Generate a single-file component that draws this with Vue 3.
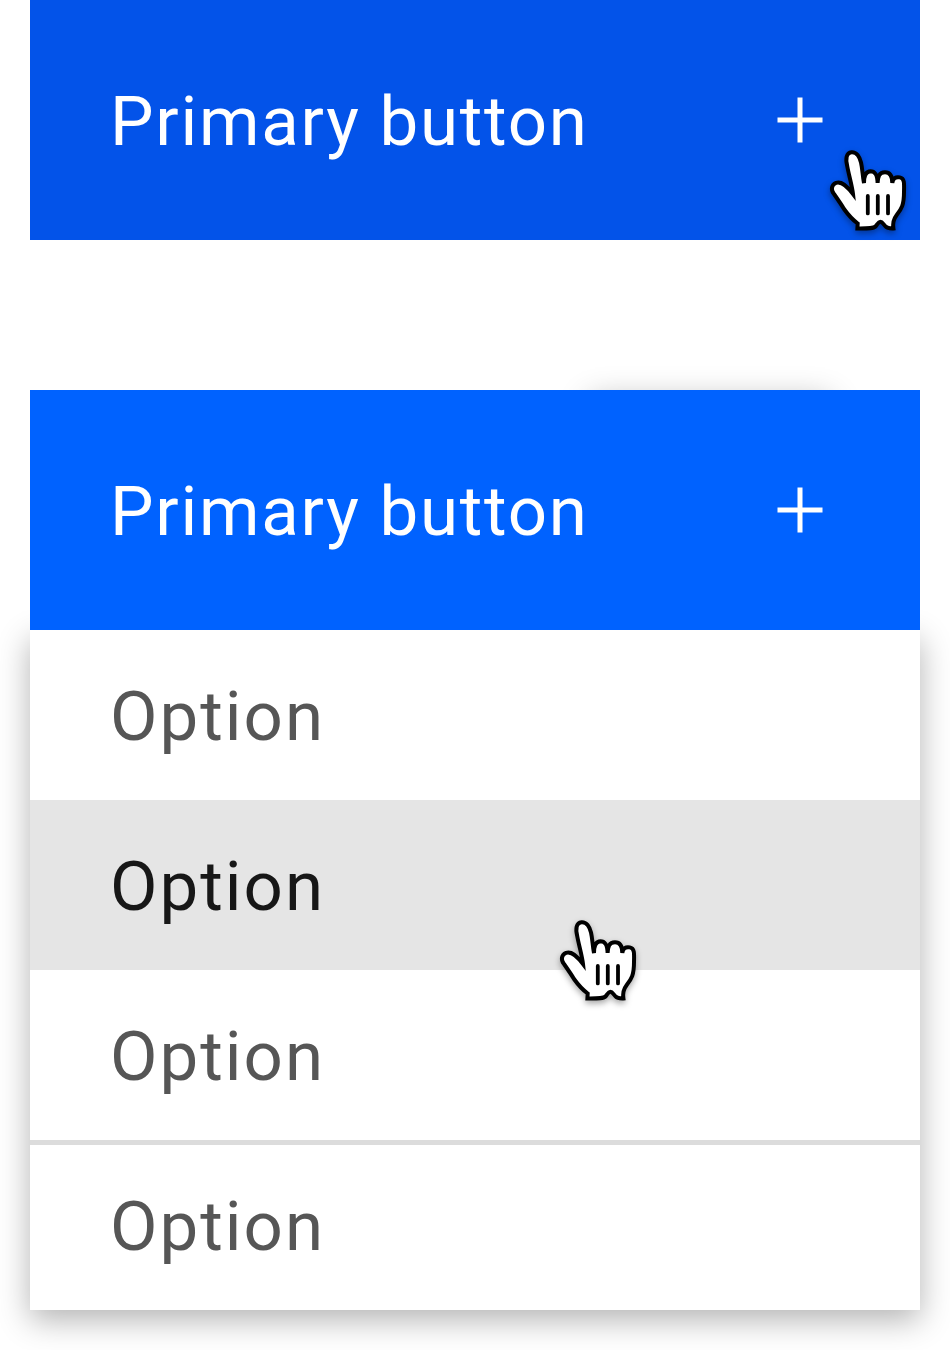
<script setup>
import { h } from 'vue'

const options = [
  { label: 'Option' },
  { label: 'Option', hovered: true },
  { label: 'Option' },
  { label: 'Option', divided: true },
]

const HandCursor = () =>
  h('svg', { viewBox: '0 0 120 120', width: 120, height: 120, 'aria-hidden': 'true' }, [
    h('path', {
      d: 'M47.4 98.4 L47.7 93.5 C43 90 39 86 34 79 C31 74 27.5 69 24 64 C20.5 60 21.5 54.5 26 52.8 C31.5 51 36.5 55.5 43 64 C42 55 39 46 37.2 36 C35.4 28.5 36.3 22.8 41.5 22.2 C46.5 21.8 49.7 27 51 32.5 C52.5 39 52.5 45.5 54 53 C54 46.5 55 41.5 60.5 41.3 C65.5 41.3 67.3 45 67.6 53 C68 46.5 69 42.3 75 42.3 C81 42.3 82.3 47 82.3 53 C83 48.5 85.5 46.6 89.8 47.4 C94.5 48.3 94.3 53 94 62 C94 75 91.5 79 86.7 85 C83.2 89.5 82.6 93 83.4 98.4 C79 98.6 77.5 98.5 75.5 96.4 C73.5 94.5 72.5 91.8 70.3 91.8 C68.2 91.8 67.3 94.7 65.5 96.5 C63.5 98.6 57 98.4 47.4 98.4 Z',
      fill: '#fff', stroke: '#000', 'stroke-width': 4, 'stroke-linejoin': 'miter',
    }),
    h('path', {
      d: 'M57.8 66 V83.4 M67.8 66 V83.4 M78 66 V83.4',
      fill: 'none', stroke: '#000', 'stroke-width': 3.8, 'stroke-linecap': 'round',
    }),
  ])
</script>

<template>
  <main class="page">
    <div class="button button-hover">
      <span class="label">Primary button</span>
      <svg class="plus" viewBox="0 0 46 46" aria-hidden="true"><path d="M23 .5V45.5M.5 23H45.5" /></svg>
      <HandCursor class="cursor cursor-button" />
    </div>
    <div class="dropdown">
      <div class="hint"></div>
      <div class="button">
        <span class="label">Primary button</span>
        <svg class="plus" viewBox="0 0 46 46" aria-hidden="true"><path d="M23 .5V45.5M.5 23H45.5" /></svg>
      </div>
      <ul class="menu">
        <li v-for="(o, i) in options" :key="i" :class="{ hovered: o.hovered, divided: o.divided }">
          <span class="option-label">{{ o.label }}</span>
          <HandCursor v-if="o.hovered" class="cursor cursor-menu" />
        </li>
      </ul>
    </div>
  </main>
</template>

<style>
body { margin: 0; background: #fff; }
</style>

<style scoped>
.page {
  box-sizing: border-box;
  width: 950px;
  height: 1350px;
  padding: 0 30px;
  overflow: hidden;
  background: #fff;
  font-family: Roboto, "Noto Sans", sans-serif;
  font-size: 69px;
  line-height: 90px;
}
.button {
  position: relative;
  display: flex;
  align-items: center;
  justify-content: space-between;
  box-sizing: border-box;
  height: 240px;
  padding: 0 97px 0 80px;
  background: #0062ff;
  color: #fff;
}
.button-hover { background: #0353e9; }
.label { padding-top: 3px; letter-spacing: 1.75px; white-space: nowrap; }
.plus { width: 46px; height: 46px; flex: none; }
.plus path { stroke: #fff; stroke-width: 5; fill: none; }
.dropdown { position: relative; margin-top: 150px; isolation: isolate; }
.hint {
  position: absolute;
  z-index: -1;
  left: 560px;
  top: 0;
  width: 240px;
  height: 120px;
  box-shadow: 0 10px 30px rgba(0, 0, 0, .3);
}
.menu {
  position: relative;
  z-index: -1;
  margin: 0;
  padding: 0;
  list-style: none;
  background: #fff;
  box-shadow: 0 10px 30px rgba(0, 0, 0, .3);
}
.menu li {
  position: relative;
  display: flex;
  align-items: center;
  box-sizing: border-box;
  height: 170px;
  padding-left: 80px;
  color: #565656;
}
.menu .hovered { background: #e5e5e5; color: #171717; z-index: 1; }
.menu .divided { box-shadow: inset 0 5px #dcdcdc; }
.option-label { padding-top: 3px; letter-spacing: 2px; }
.cursor { position: absolute; filter: drop-shadow(0 3px 3px rgba(0, 0, 0, .35)); }
.cursor-button { left: 780px; top: 130px; }
.cursor-menu { left: 510px; top: 100px; }
</style>
